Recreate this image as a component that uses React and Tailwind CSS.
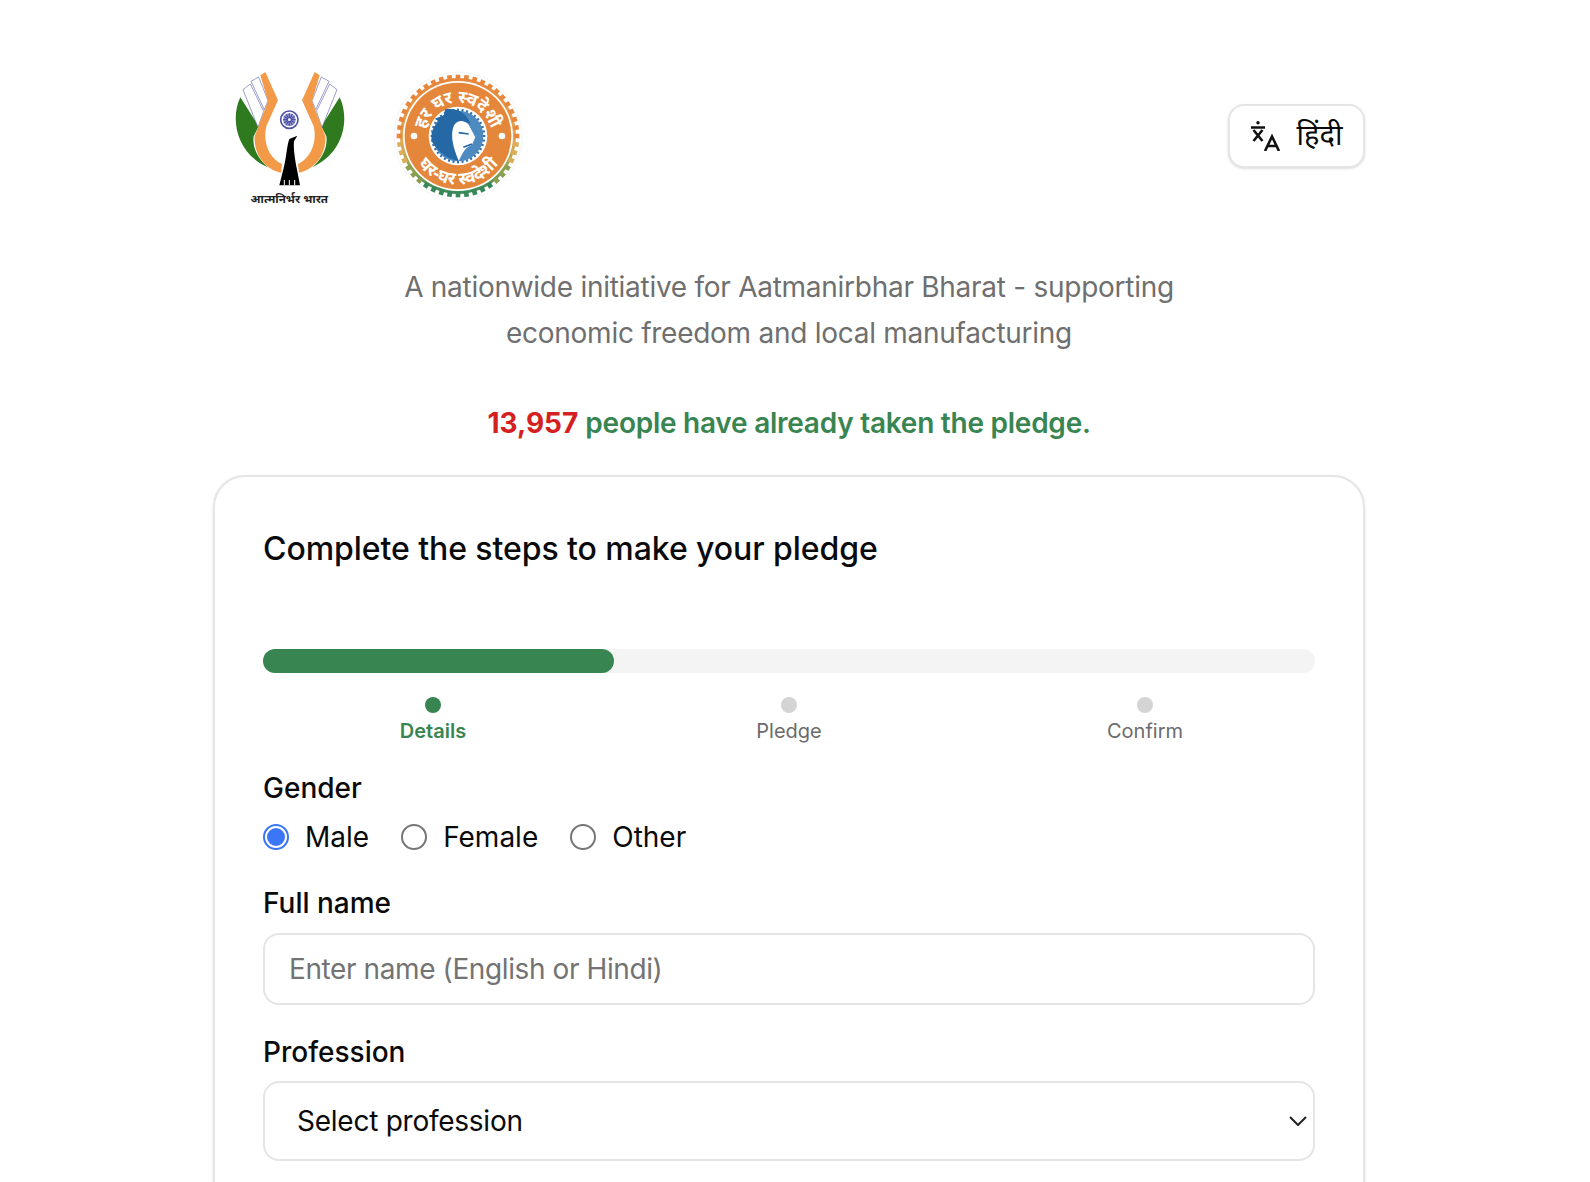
const AtmaLogo = () => {
  const wing = (
    <>
      <path d="M25 88 C-5 150 10 255 108 298 C80 275 60 240 65 205 L80 175 Z" fill="#2f7a1f" />
      <path d="M33 65 L55 48 L95 130 L78 178 Z" fill="#fff" stroke="#6b6fb0" strokeWidth="2" />
      <path d="M57 40 L80 27 L108 98 L97 125 Z" fill="#fff" stroke="#6b6fb0" strokeWidth="2" />
      <path d="M85 22 L100 12 L138 97 L103 175 C92 220 110 270 150 288 L147 314 C100 305 65 260 68 205 L108 100 Z" fill="#f29a48" />
    </>
  )
  const spokes = Array.from({ length: 12 }, (_, i) => i * 30)
  return (
    <svg viewBox="0 0 348 420" className="w-[116px] h-[140px]">
      {wing}
      <g transform="matrix(-1 0 0 1 348 0)">{wing}</g>
      <circle cx="172" cy="155" r="26" fill="#fff" stroke="#4b52a6" strokeWidth="5" />
      <circle cx="172" cy="155" r="19" fill="#8f93cc" />
      {spokes.map(a => (
        <line key={a} x1="172" y1="136" x2="172" y2="174" stroke="#3f46a0" strokeWidth="2" transform={`rotate(${a} 172 155)`} />
      ))}
      <circle cx="172" cy="155" r="4" fill="#fff" />
      <path d="M196 203 L172 213 C165 230 163 270 155 300 L142 352 L204 352 L196 310 C188 270 184 240 186 220 Z" fill="#000" />
      <path d="M157 336 V352 M172 336 V352 M188 336 V352" stroke="#fff" strokeWidth="3" />
      <text x="172" y="405" textAnchor="middle" fontSize="35" fontWeight="700" fontFamily="'Noto Sans', serif" fill="#222">आत्मनिर्भर भारत</text>
    </svg>
  )
}

const SwadeshiLogo = () => {
  const teeth = Array.from({ length: 44 }, (_, i) => (i * 360) / 44)
  const gearTeeth = Array.from({ length: 36 }, (_, i) => i * 10)
  return (
    <svg viewBox="0 0 408 408" className="w-[136px] h-[136px]">
      <defs>
        <linearGradient id="gear" x1="0" y1="0" x2="0" y2="1">
          <stop offset="0" stopColor="#e8873b" />
          <stop offset="0.55" stopColor="#e0ab57" />
          <stop offset="0.8" stopColor="#8aa050" />
          <stop offset="1" stopColor="#36875a" />
        </linearGradient>
        <path id="topArc" d="M104 204 A100 100 0 0 1 304 204" />
        <path id="bottomArc" d="M58 204 A146 146 0 0 0 350 204" />
      </defs>
      <circle cx="204" cy="204" r="192" fill="#fff" stroke="#eeeeee" strokeWidth="2" />
      <circle cx="204" cy="204" r="174" fill="url(#gear)" />
      {teeth.map(a => {
        const t = (1 - Math.cos((a * Math.PI) / 180)) / 2
        const fill = t < 0.55 ? "#e8873b" : t < 0.75 ? "#dcae5a" : t < 0.9 ? "#8aa050" : "#36875a"
        return <rect key={a} x="197" y="20" width="14" height="16" fill={fill} transform={`rotate(${a} 204 204)`} />
      })}
      <circle cx="204" cy="204" r="165" fill="#fff" />
      <circle cx="204" cy="204" r="160" fill="#e5873a" />
      <circle cx="204" cy="204" r="88" fill="#fff" />
      {gearTeeth.map(a => (
        <rect key={a} x="201" y="122" width="6" height="8" fill="#2f6fa8" transform={`rotate(${a} 204 204)`} />
      ))}
      <circle cx="204" cy="204" r="76" fill="#4d8abf" />
      <path d="M165 124 C200 118 228 132 242 168 C215 156 202 164 196 180 C190 204 196 236 206 278 C170 274 146 250 126 222 C120 196 130 176 146 160 L134 152 L162 142 Z" fill="#2468a6" />
      <path d="M192 172 C202 156 222 154 236 170 L256 208 L246 230 C232 236 224 244 218 256 L206 278 C188 236 180 200 192 172 Z" fill="#fff" />
      <path d="M206 194 L236 198 M220 238 L246 228" stroke="#2468a6" strokeWidth="5" fill="none" />
      <circle cx="72" cy="204" r="10" fill="#fff" />
      <circle cx="336" cy="204" r="10" fill="#fff" />
      <text fontSize="52" fontWeight="700" fill="#fff" fontFamily="'Noto Sans', serif">
        <textPath href="#topArc" startOffset="50%" textAnchor="middle">हर घर स्वदेशी</textPath>
      </text>
      <text fontSize="52" fontWeight="700" fill="#fff" fontFamily="'Noto Sans', serif">
        <textPath href="#bottomArc" startOffset="50%" textAnchor="middle">घर-घर स्वदेशी</textPath>
      </text>
    </svg>
  )
}

const TranslateIcon = () => (
  <svg viewBox="0 0 30 30" fill="none" stroke="#111" strokeWidth="2.6" className="w-[30px] h-[30px]">
    <circle cx="7" cy="1.8" r="1.7" fill="#111" stroke="none" />
    <path d="M0 6.5 H14 M2.5 9 L11.5 20 M11.5 9 L2.5 20" />
    <path d="M14 30 L21 15.5 L28 30 M16.5 25 H25.5" />
  </svg>
)

const Chevron = () => (
  <svg viewBox="0 0 18 10" fill="none" stroke="#222" strokeWidth="2" className="w-[18px] h-[10px]">
    <path d="M1 1 L9 9 L17 1" />
  </svg>
)

const Step = ({ label, active }) => (
  <div className="flex flex-col items-center gap-[3px]">
    <span className={`w-4 h-4 rounded-full ${active ? "bg-[#388552]" : "bg-[#d4d4d4]"}`} />
    <span className={`text-[20px] leading-[30px] ${active ? "font-semibold text-[#388552]" : "text-[#6b6b6b]"}`}>{label}</span>
  </div>
)

const Radio = ({ label, checked }) => (
  <label className="flex items-center gap-4">
    <span className={`w-[26px] h-[26px] rounded-full border-2 flex items-center justify-center ${checked ? "border-[#3b76f6]" : "border-[#767676]"}`}>
      {checked && <span className="w-[18px] h-[18px] rounded-full bg-[#3b76f6]" />}
    </span>
    <span className="text-[28px] leading-[36px] text-[#0a0a0a]">{label}</span>
  </label>
)

const App = () => {
  return (
    <div className="h-[1182px] overflow-hidden bg-white font-['Inter',sans-serif]">
      <div className="w-[1152px] ml-[213px] pt-[68px]">
        <header className="flex items-start justify-between">
          <div className="flex items-start gap-[42px] pl-[19px]">
            <AtmaLogo />
            <SwadeshiLogo />
          </div>
          <button className="mt-[36px] w-[137px] h-[64px] flex items-center justify-center gap-4 rounded-[16px] border-2 border-[#e5e5e5] bg-white shadow-sm text-[29px] text-[#0a0a0a]">
            <TranslateIcon />
            <span className="pb-[4px] font-['Noto_Sans',sans-serif]">हिंदी</span>
          </button>
        </header>
        <p className="mt-[56px] text-center text-[28px] leading-[46px] tracking-[-0.27px] text-[#6f6f6f]">
          A nationwide initiative for Aatmanirbhar Bharat - supporting<br />economic freedom and local manufacturing
        </p>
        <p className="mt-[44px] text-center text-[28px] leading-[46px] font-semibold text-[#388552]">
          <span className="font-bold text-[#d42020]">13,957</span> <span className="tracking-[-0.25px]">people have already taken the pledge.</span>
        </p>
        <section className="mt-[29px] h-[800px] rounded-[32px] border-2 border-[#e5e5e5] shadow-sm px-[48px] pt-[50px]">
          <h2 className="text-[32px] leading-[44px] font-[550] tracking-[-0.07px] text-[#0a0a0a]">Complete the steps to make your pledge</h2>
          <div className="mt-[78px] h-6 rounded-full bg-[#f4f4f4]">
            <div className="w-1/3 h-full rounded-full bg-[#388552]" />
          </div>
          <div className="mt-6 grid grid-cols-3 gap-4">
            <Step label="Details" active />
            <Step label="Pledge" />
            <Step label="Confirm" />
          </div>
          <h3 className="mt-[22px] text-[28px] leading-[40px] font-medium text-[#0a0a0a]">Gender</h3>
          <div className="mt-[11px] flex items-center gap-[32px]">
            <Radio label="Male" checked />
            <Radio label="Female" />
            <Radio label="Other" />
          </div>
          <h3 className="mt-[28px] text-[28px] leading-[40px] font-medium text-[#0a0a0a]">Full name</h3>
          <div className="mt-[10px] h-[72px] rounded-[16px] border-2 border-[#e5e5e5] flex items-center px-6 text-[28px] tracking-[-0.4px] text-[#737373]">
            Enter name (English or Hindi)
          </div>
          <h3 className="mt-[27px] text-[28px] leading-[40px] font-medium text-[#0a0a0a]">Profession</h3>
          <div className="mt-[9px] h-[80px] rounded-[16px] border-2 border-[#e5e5e5] flex items-center justify-between pl-[32px] pr-[6px] text-[28px] tracking-[-0.25px] text-[#0a0a0a]">
            Select profession
            <Chevron />
          </div>
        </section>
      </div>
    </div>
  )
}

export default App
